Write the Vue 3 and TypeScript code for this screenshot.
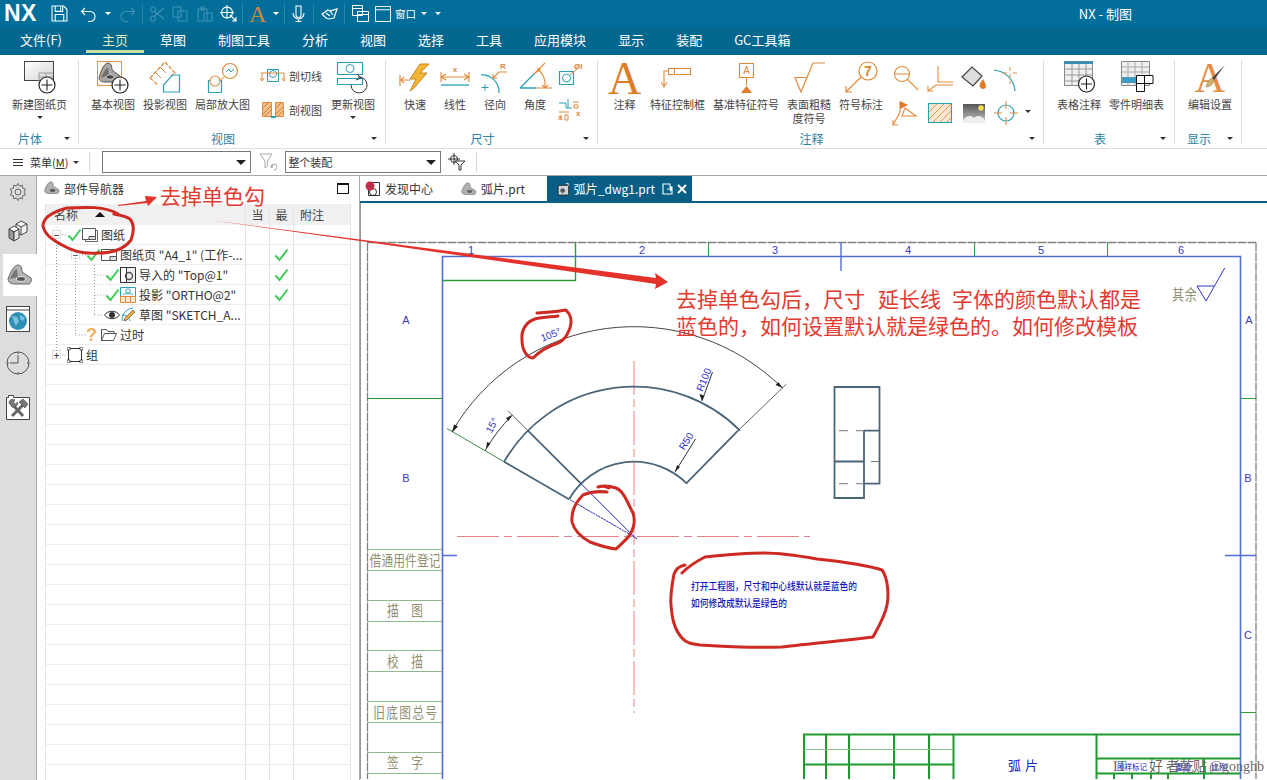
<script setup lang="ts">
interface TreeRow {
  pad: number;
  expander?: '-' | '+';
  status?: 'check' | 'eye' | 'question';
  icon?: string;
  label?: string;
  best?: boolean;
}

const menuTabs = ['主页', '草图', '制图工具', '分析', '视图', '选择', '工具', '应用模块', '显示', '装配', 'GC工具箱'];

const filled: TreeRow[] = [
  { pad: 6, expander: '-', status: 'check', icon: 'sheets', label: '图纸' },
  { pad: 25, expander: '-', status: 'check', icon: 'sheet', label: '图纸页 "A4_1" (工作-...', best: true },
  { pad: 59, status: 'check', icon: 'imported', label: '导入的 "Top@1"', best: true },
  { pad: 59, status: 'check', icon: 'ortho', label: '投影 "ORTHO@2"', best: true },
  { pad: 58, status: 'eye', icon: 'sketch', label: '草图 "SKETCH_A...' },
  { pad: 40, status: 'question', icon: 'folder', label: '过时' },
  { pad: 6, expander: '+', icon: 'group', label: '组' },
];
const rows: TreeRow[] = [...filled, ...Array.from({ length: 21 }, () => ({ pad: 0 }))];

const zoneTicks = [576.5, 709.5, 975.5, 1108.5];
const zoneNumbers = [
  { t: '1', x: 472 }, { t: '2', x: 643 }, { t: '3', x: 776 },
  { t: '4', x: 909 }, { t: '5', x: 1042 }, { t: '6', x: 1182 },
];
const zoneLetters = [
  { t: 'A', x: 407, y: 325 }, { t: 'B', x: 407, y: 483 },
  { t: 'A', x: 1250, y: 325 }, { t: 'B', x: 1249, y: 483 }, { t: 'C', x: 1249, y: 640 },
];
const leftLines = [550.5, 571.5, 601.5, 622.5, 651.5, 672.5, 702.5, 723.5, 753.5, 774.5];
// s = letter-spacing; the trailing gap is compensated in the x of the transform
const leftTexts = [
  { t: '借通用件登记', y: 567, s: 0.2 }, { t: '描图', y: 617, s: 16 }, { t: '校描', y: 668, s: 16 },
  { t: '旧底图总号', y: 719, s: 1.7 }, { t: '签字', y: 769, s: 16 },
];

const cx = 635;
const cy = 537.7;
function polar(r: number, deg: number) {
  const a = (deg * Math.PI) / 180;
  return `${(cx + r * Math.cos(a)).toFixed(1)} ${(cy - r * Math.sin(a)).toFixed(1)}`;
}
function arc(r: number, from: number, to: number) {
  return `M${polar(r, from)} A${r} ${r} 0 0 1 ${polar(r, to)}`;
}
const outerArc = arc(150, 150, 45);
const innerArc = arc(75, 150, 45);
const dimArc = arc(210, 150, 45);
const smallDim = arc(172, 150, 135);
</script>

<template>
  <div class="app">
    <header class="title-bar">
      <span class="logo">NX</span>
      <svg class="qa qa-save" viewBox="0 0 16 16" width="17" height="17"><path d="M1 1h11l3 3v11H1zM4 1v5h7V1M4 15V9h8v6M9 2v3" fill="none" stroke="#fff" stroke-width="1" /></svg>
      <svg class="qa qa-undo" viewBox="0 0 17 16" width="17" height="16"><path d="M5 2 1.500 5.500 5 9M2 5.500h8a5 5 0 0 1 0 10H8" fill="none" stroke="#fff" stroke-width="1.100" /></svg>
      <i class="caret caret-white qa-c1"></i>
      <svg class="qa qa-redo" viewBox="0 0 17 16" width="17" height="16"><path d="M12 2l3.500 3.500L12 9M15 5.500H7a5 5 0 0 0 0 10h2" fill="none" stroke="#3f93b4" stroke-width="1.100" /></svg>
      <i class="qa-sep sep-a"></i>
      <svg class="qa qa-cut" viewBox="0 0 16 16" width="16" height="16"><path d="M15 2 4 11M15 13 5 5M4 1a2.500 2.500 0 1 0 .1 0M4 10a2.500 2.500 0 1 0 .1 0" fill="none" stroke="#3f93b4" stroke-width="1.100" /></svg>
      <svg class="qa qa-copy" viewBox="0 0 16 16" width="16" height="16"><path d="M1 1h8v10H1zM6 5h9v10H6z" fill="none" stroke="#3f93b4" stroke-width="1.100" /></svg>
      <svg class="qa qa-paste" viewBox="0 0 16 16" width="16" height="16"><path d="M1 3h9v12H1zM4 1h3v3H4zM7 7h8v8H7z" fill="none" stroke="#3f93b4" stroke-width="1.100" /></svg>
      <svg class="qa qa-target" viewBox="0 0 17 17" width="17" height="17"><path d="M7 2a5.500 5.500 0 1 0 .1 0M7 0v14M0 7.500h14M10 10l6 6M16 12v4h-4" fill="none" stroke="#fff" stroke-width="1.100" /></svg>
      <i class="qa-sep sep-b"></i>
      <span class="qa qa-font">A</span>
      <i class="caret caret-white qa-c2"></i>
      <i class="qa-sep sep-c"></i>
      <svg class="qa qa-mic" viewBox="0 0 13 17" width="13" height="17"><path d="M4 1h5v9a2.500 2.500 0 0 1-5 0zM1 8a5.500 6 0 0 0 11 0M6.500 14v3M3.500 16.500h6" fill="none" stroke="#fff" stroke-width="1.100" /></svg>
      <i class="qa-sep sep-d"></i>
      <svg class="qa qa-tool" viewBox="0 0 17 12" width="17" height="12"><path d="M1 6l6-4 2 1 7-2-3 9-5 1-3-1zM5 5l4 3M9 3l3 4" fill="none" stroke="#fff" stroke-width="1.200" /></svg>
      <i class="qa-sep sep-e"></i>
      <svg class="qa qa-win1" viewBox="0 0 17 17" width="17" height="17"><path d="M.5.500h10v10H.5zM.5 3.500h10M5.500 6.500h11v10h-11zM5.500 9.500h11" fill="#046d99" stroke="#fff" /></svg>
      <svg class="qa qa-win2" viewBox="0 0 17 17" width="16" height="16"><path d="M.5.500h16v16H.5zM.5 4h16" fill="none" stroke="#fff" /></svg>
      <span class="qa qa-winlabel">窗口</span>
      <i class="caret caret-white qa-c3"></i>
      <i class="caret caret-white qa-c4"></i>
      <span class="app-title">NX - 制图</span>
    </header>

    <nav class="menu-tabs">
      <span class="file-tab">文件(F)</span>
      <span
        v-for="(tab, i) in menuTabs"
        :key="tab"
        class="menu-tab"
        :class="{ active: i === 0 }"
      >{{ tab }}</span>
    </nav>

    <section class="ribbon">
      <div class="group g-sheet">
        <div class="tools">
          <div class="tool">
            <svg class="icon" viewBox="0 0 36 37" width="36" height="37">
              <defs><linearGradient id="sheetFill" x1="0" x2="1" y1="0" y2="1"><stop offset="0" stop-color="#fff" /><stop offset="1" stop-color="#d4d4d4" /></linearGradient></defs>
              <rect x="2.500" y="1.500" width="29" height="19" fill="url(#sheetFill)" stroke="#444" />
              <path d="M17 13h14M17 17h14M17 13v8M24 13v8" stroke="#999" fill="none" />
              <circle cx="25" cy="25" r="8" fill="#fff" stroke="#222" stroke-width="1.200" />
              <path d="M25 19.500v11M19.500 25h11" stroke="#222" stroke-width="1.100" />
            </svg>
            <span class="tool-label">新建图纸页</span>
            <i class="caret"></i>
          </div>
        </div>
        <footer class="group-foot"><span>片体</span><i class="caret"></i></footer>
      </div>

      <div class="group g-view">
        <div class="tools">
          <div class="tool">
            <svg class="icon" viewBox="0 0 36 37" width="36" height="37">
              <rect x="2.500" y="1.500" width="24" height="24" fill="#fff" stroke="#e0924a" />
              <path d="M4 18C6 11 9 3 13 3c3 0 4 3 4 7l8 6c1 2 0 5-2 6H10c-4 0-6-2-6-4z" fill="#a6a6a6" stroke="#555" />
              <path d="M6 18c2-5 5-10 7-10l1 7z" fill="#6f6f6f" />
              <ellipse cx="15" cy="17" rx="4" ry="2.200" fill="#444" stroke="#ddd" stroke-width=".8" />
              <circle cx="25" cy="25" r="8" fill="#fff" stroke="#222" stroke-width="1.200" />
              <path d="M25 19.500v11M19.500 25h11" stroke="#222" stroke-width="1.100" />
            </svg>
            <span class="tool-label">基本视图</span>
          </div>
          <div class="tool">
            <svg class="icon" viewBox="0 0 32 37" width="32" height="37">
              <path d="M1 18 16 2l10 11-4 3M1 18l8 7" fill="none" stroke="#e08a3c" stroke-width="1.300" stroke-dasharray="4 1.500" />
              <path d="M6 12l6 6M11 7l6 6" stroke="#e08a3c" />
              <path d="M14.500 32v-7l9-10h7v17z" fill="none" stroke="#2b9fb6" stroke-width="1.200" />
            </svg>
            <span class="tool-label">投影视图</span>
          </div>
          <div class="tool">
            <svg class="icon" viewBox="0 0 34 37" width="34" height="37">
              <circle cx="24" cy="11" r="7.500" fill="none" stroke="#e08a3c" stroke-width="1.200" />
              <path d="M20 12l3-3 2 3 3-3" fill="none" stroke="#2b9fb6" />
              <path d="M18 17l-5 4" stroke="#e08a3c" />
              <path d="M2.500 20.500h13v12h-13z" fill="none" stroke="#2b9fb6" stroke-width="1.200" />
              <circle cx="9" cy="21" r="5" fill="#fff" stroke="#e08a3c" stroke-width="1.100" />
            </svg>
            <span class="tool-label">局部放大图</span>
          </div>
          <div class="small-col">
            <div class="small-tool">
              <svg viewBox="0 0 25 16" width="25" height="16">
                <path d="M7.500 1.500h11v12h-11z" fill="none" stroke="#2b9fb6" />
                <circle cx="13" cy="6" r="3.500" fill="none" stroke="#2b9fb6" />
                <path d="M1 5h23M2 5v7M24 5v7M0 10l2 3 2-3M22 10l2 3 2-3" fill="none" stroke="#e08a3c" />
              </svg>
              <span class="small-label">剖切线</span>
            </div>
            <div class="small-tool">
              <svg viewBox="0 0 25 16" width="25" height="16">
                <path d="M2.500 .500h9v14h-9zM15.500 .500h8v14h-8z" fill="#f1c08d" stroke="#e08a3c" />
                <path d="M3 6l6-6M3 12 11 4M5 14l6-6M16 6l6-6M16 12l7-7M18 14l5-5" stroke="#d9782a" />
                <path d="M11 15h5" stroke="#2b9fb6" stroke-width="2" />
              </svg>
              <span class="small-label">剖视图</span>
            </div>
          </div>
          <div class="tool">
            <svg class="icon" viewBox="0 0 36 37" width="36" height="37">
              <path d="M2.500 2.500h25v12h-25zM2.500 18.500h25v6h-25z" fill="#fff" stroke="#2b9fb6" stroke-width="1.200" />
              <circle cx="15" cy="8.500" r="4" fill="none" stroke="#2b9fb6" />
              <path d="M23 17a8 8 0 1 1-7 8M22 14l4 4-5 2" fill="none" stroke="#333" />
            </svg>
            <span class="tool-label">更新视图</span>
            <i class="caret"></i>
          </div>
        </div>
        <footer class="group-foot"><span>视图</span><i class="caret"></i></footer>
      </div>

      <div class="group g-dim">
        <div class="tools">
          <div class="tool narrow">
            <svg class="icon" viewBox="0 0 34 37" width="34" height="37">
              <path d="M2 15v11M3 20h9M3 20l3-3M3 20l3 3" fill="none" stroke="#e08a3c" stroke-width="1.200" />
              <path d="M22 4 12 19h6l-6 12 4-3 13-15h-7l9-9z" fill="#f2b632" stroke="#c98422" />
            </svg>
            <span class="tool-label">快速</span>
          </div>
          <div class="tool narrow">
            <svg class="icon" viewBox="0 0 34 37" width="34" height="37">
              <path d="M3 12v10M31 12v10M3 17h28M3 17l5-3M3 17l5 3M31 17l-5-3M31 17l-5 3" fill="none" stroke="#e08a3c" stroke-width="1.100" />
              <path d="M3 25h28" stroke="#2b9fb6" stroke-width="1.300" />
              <text x="17" y="12" class="mini-o" text-anchor="middle">x</text>
            </svg>
            <span class="tool-label">线性</span>
          </div>
          <div class="tool narrow">
            <svg class="icon" viewBox="0 0 34 37" width="34" height="37">
              <path d="M3 15a17 17 0 0 1 18 18" fill="none" stroke="#2b9fb6" stroke-width="1.200" />
              <path d="M7 24v7M3.500 27.500h7" stroke="#2b9fb6" />
              <path d="M29 12h-8L15 18M15 14v4h4" fill="none" stroke="#e08a3c" stroke-width="1.100" />
              <text x="25" y="9" class="mini-o" text-anchor="middle">R</text>
            </svg>
            <span class="tool-label">径向</span>
          </div>
          <div class="tool narrow">
            <svg class="icon" viewBox="0 0 36 37" width="36" height="37">
              <path d="M3 28 17 14M3 28h16" fill="none" stroke="#2b9fb6" stroke-width="1.300" />
              <path d="M17 14 28 3M19 28h16M21 9c5 5 8 11 7 18M18 13l5-3-3-2M25 25l3 3 3-3" fill="none" stroke="#e08a3c" stroke-width="1.100" />
            </svg>
            <span class="tool-label">角度</span>
          </div>
          <div class="small-col dim-col">
            <svg viewBox="0 0 28 26" width="28" height="26">
              <path d="M2.500 11.500h14v13h-14z" fill="none" stroke="#2b9fb6" stroke-width="1.200" />
              <circle cx="9.500" cy="18" r="4" fill="none" stroke="#2b9fb6" />
              <path d="M13 15l7-6" stroke="#e08a3c" />
              <text x="17" y="9" class="mini-o">ØI</text>
            </svg>
            <svg viewBox="0 0 28 26" width="28" height="26">
              <path d="M2 7h7v5M11 3v9M9 12h6" fill="none" stroke="#2b9fb6" />
              <path d="M2 16h10M16 6h6M17 9h4v3h-4zM4 19v5M8 19h3v5H8z" fill="none" stroke="#e08a3c" />
              <text x="19" y="20" class="mini-o">x</text>
              <text x="1" y="24" class="mini-o">x</text>
            </svg>
          </div>
        </div>
        <footer class="group-foot"><span>尺寸</span><i class="caret"></i></footer>
      </div>

      <div class="group g-note">
        <div class="tools">
          <div class="tool note-a">
            <span class="big-a">A</span>
            <span class="tool-label">注释</span>
          </div>
          <div class="tool">
            <svg class="icon" viewBox="0 0 34 37" width="34" height="37">
              <path d="M7.500 8.500h22v6h-22zM13.500 8.500v6M7.500 11H3v15" fill="none" stroke="#e08a3c" stroke-width="1.100" />
              <path d="M0 22l3 5 3-5" fill="none" stroke="#e08a3c" stroke-width="1.100" />
            </svg>
            <span class="tool-label">特征控制框</span>
          </div>
          <div class="tool">
            <svg class="icon" viewBox="0 0 34 37" width="34" height="37">
              <path d="M10.500 3.500h14v14h-14zM17.500 17.500v8" fill="none" stroke="#e08a3c" stroke-width="1.100" />
              <path d="M12 33l5.500-7 5.500 7z" fill="#e07b28" />
              <text x="17.500" y="14" class="mini-a" text-anchor="middle">A</text>
            </svg>
            <span class="tool-label">基准特征符号</span>
          </div>
          <div class="tool">
            <svg class="icon" viewBox="0 0 34 37" width="34" height="37">
              <path d="M3 17.500h12L9 32zM9 32 21 3h12" fill="none" stroke="#e08a3c" stroke-width="1.200" />
            </svg>
            <span class="tool-label wrap">表面粗糙度符号</span>
          </div>
          <div class="tool">
            <svg class="icon" viewBox="0 0 36 37" width="36" height="37">
              <circle cx="25" cy="11" r="9" fill="none" stroke="#e08a3c" stroke-width="1.200" />
              <text x="25" y="16" class="mini-seven" text-anchor="middle">7</text>
              <path d="M18 17 3 32M3 26v6h6" fill="none" stroke="#e08a3c" stroke-width="1.200" />
            </svg>
            <span class="tool-label">符号标注</span>
          </div>
          <div class="symbol-grid">
            <svg viewBox="0 0 28 28" width="28" height="28">
              <circle cx="11" cy="10" r="7.500" fill="none" stroke="#e08a3c" stroke-width="1.100" />
              <path d="M3.500 10h15M16 15l11 11" stroke="#e08a3c" stroke-width="1.100" />
            </svg>
            <svg viewBox="0 0 28 28" width="28" height="28">
              <path d="M12 2v16h15M27 21H10L2 27M2 22v5h5" fill="none" stroke="#e08a3c" stroke-width="1.100" />
            </svg>
            <svg viewBox="0 0 28 28" width="28" height="28">
              <path d="M2 13 12 3l10 9-9 10z" fill="#ddd" stroke="#444" stroke-width="1.200" />
              <path d="M23 15c-3 4-4 6-3 8a3.200 3.200 0 0 0 6 0c0-2-1-5-3-8z" fill="#e07b28" />
            </svg>
            <svg viewBox="0 0 28 28" width="28" height="28">
              <path d="M2 6c11 1 20 9 21 21" fill="none" stroke="#2b9fb6" stroke-width="1.200" />
              <path d="M18 3v4M18 10v4M18 17v3M11 9h4M21 9h4" stroke="#e08a3c" />
            </svg>
            <svg viewBox="0 0 28 28" width="28" height="28">
              <path d="M9 3v10L2 26M2 21v5h5" fill="none" stroke="#e08a3c" stroke-width="1.100" />
              <path d="M9 2l8 4-8 4z" fill="#e07b28" />
              <path d="M14 9l11 8H11z" fill="none" stroke="#e08a3c" stroke-width="1.100" />
            </svg>
            <svg viewBox="0 0 28 28" width="28" height="28">
              <rect x="2.500" y="4.500" width="23" height="19" fill="#fbe6d0" stroke="#2b9fb6" stroke-width="1.100" />
              <path d="M3 13l8-8M3 20 18 5M7 23 25 5M14 23 25 12M21 23l4-4" stroke="#e39a57" />
            </svg>
            <svg viewBox="0 0 28 28" width="28" height="28">
              <defs><linearGradient id="photoFill" x1="0" x2="0" y1="0" y2="1"><stop offset="0" stop-color="#555" /><stop offset="1" stop-color="#c8c8c8" /></linearGradient></defs>
              <rect x="3" y="5" width="22" height="19" fill="url(#photoFill)" />
              <circle cx="21" cy="9" r="2.700" fill="#f3e04a" />
              <path d="M3 21c4-5 8-5 11-2 3-3 7-3 11 2v3H3z" fill="#eee" />
            </svg>
            <svg viewBox="0 0 28 28" width="28" height="28">
              <circle cx="14" cy="14" r="8" fill="none" stroke="#2b9fb6" stroke-width="1.200" />
              <path d="M14 2v8M14 18v8M2 14h8M18 14h8" stroke="#e08a3c" />
            </svg>
          </div>
          <i class="caret grid-caret"></i>
        </div>
        <footer class="group-foot"><span>注释</span><i class="caret"></i></footer>
      </div>

      <div class="group g-table">
        <div class="tools">
          <div class="tool">
            <svg class="icon" viewBox="0 0 36 37" width="36" height="37">
              <path d="M3.500 1.500h28v24h-28z" fill="#efefef" stroke="#888" />
              <path d="M3 1h29v3H3z" fill="#3f8fb0" />
              <path d="M3 9h29M3 15h29M3 21h29M11 4v22M18 4v22M25 4v22" stroke="#999" />
              <circle cx="25.500" cy="24" r="8" fill="#fff" stroke="#222" stroke-width="1.200" />
              <path d="M25.500 18.500v11M20 24h11" stroke="#222" stroke-width="1.100" />
            </svg>
            <span class="tool-label">表格注释</span>
          </div>
          <div class="tool">
            <svg class="icon" viewBox="0 0 36 37" width="36" height="37">
              <path d="M2.500 1.500h28v24h-28z" fill="#efefef" stroke="#888" />
              <path d="M3 7h27M3 12h27M9 2v23M16 2v23M23 2v12" stroke="#aaa" />
              <path d="M3 17h14v6H3z" fill="#3f9cc0" />
              <path d="M17.500 15.500h16.500v8H17.500zM17.500 23.500h8v8h-8zM25.500 15.500v8" fill="#fff" stroke="#111" />
            </svg>
            <span class="tool-label">零件明细表</span>
          </div>
        </div>
        <footer class="group-foot"><span>表</span><i class="caret"></i></footer>
      </div>

      <div class="group g-show">
        <div class="tools">
          <div class="tool brush-tool">
            <span class="big-a small-a">A</span>
            <svg class="brush" viewBox="0 0 24 30" width="24" height="30">
              <path d="M23 2 10 15l2 2z" fill="#444" />
              <path d="M10 15c-3 1-5 4-6 9 4 0 7-2 8-7z" fill="#cdb06e" stroke="#9c7a3c" stroke-width=".5" />
            </svg>
            <span class="tool-label">编辑设置</span>
          </div>
        </div>
        <footer class="group-foot"><span>显示</span><i class="caret"></i></footer>
      </div>
    </section>

    <section class="tool-strip">
      <span class="hamburger"><i></i><i></i><i></i></span>
      <span class="strip-menu">菜单(<u>M</u>)</span>
      <i class="caret"></i>
      <i class="strip-sep"></i>
      <div class="combo combo-a"><i class="caret caret-black"></i></div>
      <svg class="filter-undo" viewBox="0 0 18 18" width="18" height="18">
        <path d="M1 1h12L8.500 8v5L6 15V8z" fill="none" stroke="#aaa" />
        <path d="M11 13l2 2 1-3M12 14a3 3 0 1 1 3 3" fill="none" stroke="#aaa" />
      </svg>
      <div class="combo combo-b"><span>整个装配</span><i class="caret caret-black"></i></div>
      <svg class="filter-cross" viewBox="0 0 18 18" width="18" height="18">
        <circle cx="6" cy="6" r="3.500" fill="none" stroke="#333" />
        <path d="M6 0v12M0 6h12" stroke="#333" />
        <path d="M7 8h10l-4 4v5h-2v-5z" fill="#fff" stroke="#333" />
      </svg>
      <i class="strip-sep sep-last"></i>
    </section>

    <main class="workspace">
      <aside class="rail">
        <div class="rail-item">
          <svg viewBox="0 0 20 20" width="20" height="20"><path d="M10 1.500l1.500 2.600 2.800-.9.400 3 2.900 1-1.500 2.800 1.500 2.800-2.900 1-.4 3-2.800-.9L10 18.500l-1.500-2.600-2.800.9-.4-3-2.900-1 1.500-2.800-1.500-2.800 2.900-1 .4-3 2.800.9z" fill="none" stroke="#666" /><circle cx="10" cy="10" r="3" fill="none" stroke="#666" /></svg>
        </div>
        <div class="rail-item">
          <svg viewBox="0 0 20 22" width="20" height="22">
            <path d="M8 4l5-3 6 3v8l-6 3-5-3z" fill="#f2f2f2" stroke="#444" />
            <path d="M8 4l5 3 6-3M13 7v8" fill="none" stroke="#444" />
            <path d="M1 9l5-3 5 3-5 3z" fill="#fff" stroke="#444" />
            <path d="M1 9l5 3v9l-5-3z" fill="#999" stroke="#444" />
            <path d="M6 12l5-3v9l-5 3z" fill="#e2e2e2" stroke="#444" />
          </svg>
        </div>
        <div class="rail-item active">
          <svg viewBox="0 0 26 22" width="26" height="22">
            <path d="M1 15C3 9 7 1 11 1c3 0 4 3 4 7l9 6c1 2 0 5-2 6H8c-4 0-7-2-7-5z" fill="#b4b4b4" stroke="#666" />
            <path d="M3 15c2-5 5-10 7-10l1 8z" fill="#777" />
            <ellipse cx="14" cy="15" rx="4.500" ry="2.400" fill="#555" stroke="#e8e8e8" />
          </svg>
        </div>
        <div class="rail-item">
          <svg viewBox="0 0 24 26" width="24" height="26">
            <rect x=".5" y=".5" width="23" height="25" fill="#fff" stroke="#444" />
            <path d="M1 4h22" stroke="#444" />
            <circle cx="12" cy="15" r="9" fill="#2f8fb5" />
            <path d="M6 10l5 1 2 4-3 5-2-4zM14 9l5 3-2 3-3-2z" fill="#7cc0dc" />
          </svg>
        </div>
        <div class="rail-item">
          <svg viewBox="0 0 24 24" width="24" height="24">
            <circle cx="12" cy="12" r="11" fill="none" stroke="#555" />
            <path d="M12 4v8H4M12 1v2M12 21v2M1 12h2M21 12h2" fill="none" stroke="#555" />
          </svg>
        </div>
        <div class="rail-item">
          <svg viewBox="0 0 24 26" width="24" height="26">
            <path d="M.5 3.500h2v-2h5v2h16v22H.5z" fill="#fff" stroke="#444" />
            <path d="M7 11l10 11" stroke="#666" stroke-width="3" />
            <path d="M3 9c0-3 3-5 6-3L7.500 8.500 9.500 10 11.500 8c1 3-2 6-5.500 5z" fill="#777" stroke="#333" stroke-width=".5" />
            <path d="M17 11 6 22" stroke="#666" stroke-width="3" />
            <path d="M13 8l4-3 5 5-3 4z" fill="#777" stroke="#333" stroke-width=".5" />
          </svg>
        </div>
      </aside>

      <section class="navigator">
        <div class="nav-head">
          <svg viewBox="0 0 26 22" width="16" height="14">
            <path d="M1 15C3 9 7 1 11 1c3 0 4 3 4 7l9 6c1 2 0 5-2 6H8c-4 0-7-2-7-5z" fill="#b0b0b0" stroke="#666" />
            <ellipse cx="14" cy="15" rx="4.500" ry="2.400" fill="#555" />
          </svg>
          <span>部件导航器</span>
          <i class="maximize"></i>
        </div>
        <div class="tree-table">
          <div class="tree-header">
            <div class="col-name">名称<i class="sort-up"></i></div>
            <div class="col-flag">当</div>
            <div class="col-flag">最</div>
            <div class="col-note">附注</div>
          </div>
          <div
            v-for="(row, i) in rows"
            :key="i"
            class="tree-row"
          >
            <div class="col-name row-name" :style="{ paddingLeft: row.pad + 'px' }">
              <i v-if="row.expander" class="expander">{{ row.expander === '-' ? '−' : '+' }}</i>
              <svg v-if="row.status === 'check'" class="slot" viewBox="0 0 15 14" width="15" height="14"><path d="M1.500 7.500 5.500 12 13.500 1.500" fill="none" stroke="#3ecb58" stroke-width="2" /></svg>
              <svg v-else-if="row.status === 'eye'" class="slot" viewBox="0 0 16 14" width="16" height="14"><path d="M.5 7C4 2 12 2 15.500 7 12 12 4 12 .5 7z" fill="#fff" stroke="#333" /><circle cx="8" cy="7" r="3" fill="#333" /></svg>
              <span v-else-if="row.status === 'question'" class="slot question">?</span>

              <svg v-if="row.icon === 'sheets'" viewBox="0 0 16 14" width="16" height="14"><path d="M3.500 2.500h12v11h-12z" fill="none" stroke="#666" /><path d="M.5 .5h13v11H.5z" fill="#fff" stroke="#555" /><path d="M7 8.500h6.500V11.500H7z" fill="#ddd" stroke="#555" /></svg>
              <svg v-else-if="row.icon === 'sheet'" viewBox="0 0 16 14" width="16" height="14"><path d="M.5 1.500h15v11H.5z" fill="#fff" stroke="#555" /><path d="M9 8.500h6.500v4H9z" fill="#ddd" stroke="#555" /></svg>
              <svg v-else-if="row.icon === 'imported'" viewBox="0 0 16 16" width="16" height="16"><path d="M.5 .5h15v15H.5z" fill="#eee" stroke="#333" /><path d="M.5 .5h6v15h-6z" fill="#fff" stroke="#333" /><circle cx="9" cy="9" r="3.500" fill="none" stroke="#555" stroke-width="1.400" /></svg>
              <svg v-else-if="row.icon === 'ortho'" viewBox="0 0 16 16" width="16" height="16"><path d="M.5 .5h15v9H.5z" fill="#fff" stroke="#2b9fb6" /><circle cx="8" cy="4" r="2.200" fill="none" stroke="#2b9fb6" /><path d="M3 8c2-2 8-2 10 0" fill="none" stroke="#2b9fb6" /><path d="M.5 9.500h15v6H.5zM5.500 9.500v6M10.500 9.500v6" fill="#fbe6d0" stroke="#e08a3c" /></svg>
              <svg v-else-if="row.icon === 'sketch'" viewBox="0 0 16 16" width="16" height="16"><path d="M2 14C2 7 6 2 13 1M2 8c4 0 7 2 8 6" fill="none" stroke="#2b9fb6" /><path d="M5 11l8-8 2 2-8 8-3 1z" fill="#eab03a" stroke="#555" stroke-width=".7" /></svg>
              <svg v-else-if="row.icon === 'folder'" viewBox="0 0 16 14" width="16" height="14"><path d="M.5 12.500V1.500h5l1.500 2h6v2M.5 12.500l3-7h12l-3 7z" fill="#fff" stroke="#555" /></svg>
              <svg v-else-if="row.icon === 'group'" viewBox="0 0 16 16" width="16" height="16"><path d="M1.500 1.500h13v13h-13z" fill="none" stroke="#333" /><path d="M0 0h3v3H0zM13 0h3v3h-3zM0 13h3v3H0zM13 13h3v3h-3z" fill="#fff" stroke="#333" stroke-width=".8" /></svg>

              <span v-if="row.label" class="row-label">{{ row.label }}</span>
            </div>
            <div class="col-flag"></div>
            <div class="col-flag">
              <svg v-if="row.best" viewBox="0 0 15 14" width="15" height="14"><path d="M1.500 7.500 5.500 12 13.500 1.500" fill="none" stroke="#3ecb58" stroke-width="2" /></svg>
            </div>
            <div class="col-note"></div>
          </div>
          <svg class="tree-dots" viewBox="0 0 130 160" width="130" height="160">
            <path d="M10.500 38V151M16 31h4M29.500 48V131M29.500 131h11M36 51h4M48.500 61V111M48.500 71h10M48.500 91h10M48.500 111h9M16 151h5" fill="none" stroke="#999" stroke-dasharray="1 2" />
          </svg>
        </div>
      </section>

      <section class="graphics">
        <div class="doc-tabs">
          <div class="doc-tab tab-home">
            <svg viewBox="0 0 16 16" width="16" height="16"><path d="M3.500 1.500h11v13h-11z" fill="#fff" stroke="#333" /><circle cx="8" cy="11" r="3.500" fill="none" stroke="#333" /><circle cx="5" cy="5" r="4.500" fill="#c0304a" /></svg>
            <span>发现中心</span>
          </div>
          <div class="doc-tab tab-part">
            <svg viewBox="0 0 26 22" width="16" height="14"><path d="M1 15C3 9 7 1 11 1c3 0 4 3 4 7l9 6c1 2 0 5-2 6H8c-4 0-7-2-7-5z" fill="#b0b0b0" stroke="#777" /><ellipse cx="14" cy="15" rx="4.500" ry="2.400" fill="#666" /></svg>
            <span>弧片.prt</span>
          </div>
          <div class="doc-tab tab-active">
            <svg viewBox="0 0 16 16" width="16" height="16"><path d="M1.500 3.500h13v12h-13z" fill="#cfd8dc" stroke="#222" /><circle cx="7" cy="10" r="3.500" fill="#555" stroke="#eee" /><path d="M11 1h3v3" fill="none" stroke="#fff" /></svg>
            <span class="active-name">弧片_dwg1.prt</span>
            <svg class="tab-popout" viewBox="0 0 11 12" width="11" height="12"><path d="M1 1h7v3h2v7H1zM5 6h5M8 4l2 2-2 2" fill="none" stroke="#fff" stroke-width="1.100" /></svg>
            <svg class="tab-close" viewBox="0 0 10 10" width="10" height="10"><path d="M1 1l8 8M9 1 1 9" stroke="#fff" stroke-width="2" /></svg>
          </div>
        </div>
        <svg class="sheet" viewBox="361 204 906 576" width="906" height="576">
          <!-- 图框 -->
          <path d="M368.500 243.500H1257M1257 243.500V780M368.500 243.500V780" fill="none" stroke="#808080" stroke-width="1.300" stroke-dasharray="9 1" />
          <path d="M443.500 780V257.500H1241.500V780" fill="none" stroke="#4f6fd8" stroke-width="1.600" />
          <path d="M443.500 281.500H576.500V243.500" fill="none" stroke="#2f9a3c" stroke-width="1.400" />
          <path v-for="x in zoneTicks" :key="x" :d="`M${x} 243.500V257`" stroke="#2f9a3c" fill="none" />
          <path d="M842 243.500V272" stroke="#4f6fd8" stroke-width="1.400" />
          <path d="M443 556.500H458M1226 556.500H1257" stroke="#4f6fd8" stroke-width="1.400" />
          <path d="M368.500 399.500H443M1241.500 399.500H1257M1241.500 713.500H1257" stroke="#2f9a3c" />
          <text v-for="n in zoneNumbers" :key="n.t" class="zone" :x="n.x" y="255" text-anchor="middle">{{ n.t }}</text>
          <text v-for="(l, i) in zoneLetters" :key="i" class="zone" :x="l.x" :y="l.y" text-anchor="middle">{{ l.t }}</text>

          <!-- 左侧栏 -->
          <path v-for="y in leftLines" :key="y" :d="`M368.500 ${y}H443`" stroke="#8dbb8f" fill="none" />
          <text
            v-for="l in leftTexts"
            :key="l.t"
            class="left-text"
            :transform="`translate(${406 + l.s * 0.39} ${l.y}) scale(.78 1)`"
            :letter-spacing="l.s"
            text-anchor="middle"
          >{{ l.t }}</text>

          <!-- 中心线 -->
          <path d="M635 362V714" stroke="#e8808a" stroke-dasharray="34 4 8 4" fill="none" />
          <path d="M458 537.500H811" stroke="#e8808a" stroke-dasharray="42 5 8 5" fill="none" />

          <!-- 弧片 -->
          <g fill="none" stroke="#4a6478" stroke-width="1.800">
            <path :d="outerArc" />
            <path :d="innerArc" />
            <path d="M505.100 462.700 570 500.200M739 431.700 687 484.700M528.900 431.600 582 484.700" />
          </g>
          <path d="M528.900 431.600 509 411.700M739 431.700 787.500 385" stroke="#666" fill="none" />
          <path d="M505 462.700 448 429.500" stroke="#3f8a4a" fill="none" />
          <path :d="dimArc" fill="none" stroke="#444" />
          <path :d="smallDim" fill="none" stroke="#333" />
          <path d="M582 484.700 635 537.700M570 500.200 635 537.700 638 540" stroke="#2222c0" fill="none" />
          <path d="M570 500.200 635 537.700" stroke="#fff" stroke-dasharray="1 2" fill="none" />
          <path d="M713.500 373 703 402M696.500 440 676 473" stroke="#333" fill="none" />
          <g fill="#222">
            <path d="M453 433.500l2-8 4 2zM783.500 389l-7-3 3-3zM487 450l1-7 3.500 1.500zM513 416l-6 3 2.500 3zM703 402l-2.500-7 4.500 1.500zM676 473l2-7 3 2z" />
          </g>
          <text class="dim" transform="translate(553 339) rotate(-22)" text-anchor="middle">105°</text>
          <text class="dim" transform="translate(496 428) rotate(-62)" text-anchor="middle">15°</text>
          <text class="dim" transform="translate(708 382) rotate(-68)" text-anchor="middle">R100</text>
          <text class="dim" transform="translate(690 444) rotate(-58)" text-anchor="middle">R50</text>

          <!-- 侧视图 -->
          <path d="M835.500 388H880.500V484.700H865V499H835.500ZM865 431.700H880.500M865 431.700V499M835.500 462.500H865" fill="none" stroke="#4a6478" stroke-width="1.800" />
          <path d="M840 431.700H849M857 431.700H865M840 484.700H849M857 484.700H865M872 462.500H880" stroke="#777" fill="none" />

          <!-- 粗糙度 -->
          <text class="left-text" transform="translate(1173 301) scale(.8 1)" letter-spacing="1">其余</text>
          <path d="M1198 287H1215M1198 287 1207 302 1225.700 269" fill="none" stroke="#3333cc" />

          <!-- 注释文字 -->
          <text class="note" x="692" y="591" textLength="166" lengthAdjust="spacingAndGlyphs">打开工程图，尺寸和中心线默认就是蓝色的</text>
          <text class="note" x="692" y="608" textLength="96" lengthAdjust="spacingAndGlyphs">如何修改成默认是绿色的</text>

          <!-- 标题栏 -->
          <g fill="none" stroke="#1f9a2f" stroke-width="2">
            <path d="M805 780V735.500H1241M827 735.500V780M850 735.500V780M895 735.500V780M930 735.500V780M954.500 735.500V780M1097.500 735.500V780M805 765.500H954.500M1097.500 759.500H1241M1097.500 774.500H1241" />
            <path d="M1115 774.500V780M1133 774.500V780M1152 774.500V780M1169 774.500V780M1205 759.500V780" />
          </g>
          <path d="M805 750.500H954" stroke="#8dbb8f" fill="none" />
          <text class="title-name" x="1026" y="771" text-anchor="middle" letter-spacing="4">弧片</text>
          <text class="stamp" x="1118" y="771" textLength="30" lengthAdjust="spacingAndGlyphs">图样标记</text>
          <text class="stamp" x="1176" y="771" textLength="16">重量</text>
          <text class="stamp" x="1212" y="771" textLength="16">比例</text>
          <text class="watermark" y="772"><tspan x="1114">IT</tspan><tspan x="1150">好</tspan><tspan x="1167">者</tspan><tspan x="1181">乾</tspan><tspan x="1194">贴</tspan><tspan x="1210">@gonghb</tspan></text>
        </svg>
      </section>
    </main>

    <!-- 截图上的红色手绘标注 -->
    <svg class="markup" viewBox="0 0 1267 780" width="1267" height="780">
      <text class="red-text" x="160" y="204">去掉单色勾</text>
      <text class="red-text" x="676" y="307">去掉单色勾后，<tspan x="823">尺寸</tspan><tspan x="878">延长线</tspan><tspan x="952">字体的颜色默认都是</tspan></text>
      <text class="red-text" x="676" y="334">蓝色的，如何设置默认就是绿色的。如何修改模板</text>
      <path d="M118 205 146 201 145 196 157 197 148 206 147 203 118 206Z" fill="#e4322a" />
      <path d="M210 220 656 278 655 273 668 282 655 289 656 284 360 241Z" fill="#e4322a" />
      <g fill="none" stroke="#cc2a22" stroke-width="3" stroke-linejoin="round" stroke-linecap="round">
        <path d="M118 214C105 206 85 207 67 208 52 212 43 218 43 226 45 236 55 241 62 245 72 251 85 254 98 253 113 253 125 248 131 240 134 232 134 224 130 219 125 216 120 215 114 214" />
        <path d="M537 313C545 312 556 312 566 310 571 315 572 322 570 328 567 335 565 340 558 343 549 346 541 350 533 358 527 358 522 350 522 340 521 330 526 322 535 319 543 317 551 317 558 316" />
        <path d="M609 488C606 486 601 486 598 487 604 485 610 486 616 488 624 491 628 504 633 513 636 522 633 530 629 536 625 541 620 545 616 549 607 548 598 545 590 542 581 537 574 530 572 522 571 512 576 502 583 495 590 492 598 491 607 492" />
        <path d="M685 565 C679 566 676 569 674 574 C672 585 670 595 671 605 672 618 674 629 682 638 686 643 692 644 700 645 730 647 755 648 782 647 812 643 842 641 873 637 879 626 885 616 887 605 889 595 888 578 882 570 870 566 845 562 817 559 800 556 783 553 764 553 745 553 724 555 705 557 697 561 689 566 682 573" />
      </g>
    </svg>
  </div>
</template>

<style>
html,
body {
  margin: 0;
  overflow: hidden;
  background: #fff;
}
</style>

<style scoped>
.app {
  position: relative;
  display: flex;
  flex-direction: column;
  width: 1267px;
  height: 780px;
  overflow: hidden;
  font-family: "Noto Sans CJK SC", "Noto Sans", sans-serif;
  font-size: 11px;
  color: #444;
  background: #fff;
}

.caret {
  display: inline-block;
  width: 0;
  height: 0;
  border-left: 3px solid transparent;
  border-right: 3px solid transparent;
  border-top: 3px solid #333;
}
.caret-white {
  border-top-color: #fff;
}
.caret-black {
  border-left-width: 5px;
  border-right-width: 5px;
  border-top-width: 5px;
  border-top-color: #222;
}

/* title bar */
.title-bar {
  position: relative;
  flex: none;
  height: 27px;
  background: #046e9a;
  display: flex;
  align-items: center;
}
.logo {
  margin-left: 4px;
  width: 41px;
  font-family: "Liberation Sans", sans-serif;
  font-weight: 700;
  font-size: 23px;
  letter-spacing: 0.5px;
  color: #fff;
}
.qa {
  flex: none;
}
.qa-save { margin-left: 6px; }
.qa-undo { margin-left: 12px; }
.qa-c1 { margin-left: 8px; }
.qa-redo { margin-left: 8px; }
.qa-sep {
  flex: none;
  width: 1px;
  height: 20px;
  background: #2a85aa;
}
.sep-a { margin-left: 6px; }
.qa-cut { margin-left: 6px; }
.qa-copy { margin-left: 7px; }
.qa-paste { margin-left: 9px; }
.qa-target { margin-left: 7px; }
.sep-b { margin-left: 5px; }
.qa-font {
  margin-left: 6px;
  width: 18px;
  font-family: "Liberation Serif", serif;
  font-size: 24px;
  line-height: 24px;
  color: #c98a3c;
}
.qa-c2 { margin-left: 6px; }
.sep-c { margin-left: 5px; }
.qa-mic { margin-left: 7px; }
.sep-d { margin-left: 8px; }
.qa-tool { margin-left: 7px; }
.sep-e { margin-left: 6px; }
.qa-win1 { margin-left: 7px; }
.qa-win2 { margin-left: 6px; }
.qa-winlabel {
  margin-left: 4px;
  font-size: 10.500px;
  color: #fff;
}
.qa-c3 { margin-left: 5px; }
.qa-c4 { margin-left: 8px; }
.app-title {
  margin-left: auto;
  margin-right: 135px;
  font-size: 13px;
  color: #fff;
}

/* menu tabs */
.menu-tabs {
  flex: none;
  display: flex;
  height: 28px;
  background: #04678f;
  font-size: 13px;
  color: #fff;
}
.file-tab {
  width: 86px;
  box-sizing: border-box;
  padding-left: 20px;
  line-height: 26px;
}
.menu-tab {
  padding: 0 16px;
  line-height: 26px;
}
.menu-tab.active {
  height: 23px;
  color: #dfe9b8;
  border-bottom: 3px solid #c9dc9f;
}

/* ribbon */
.ribbon {
  flex: none;
  display: flex;
  height: 93px;
  box-sizing: content-box;
  border-bottom: 1px solid #dedede;
}
.group {
  position: relative;
  display: flex;
  flex-direction: column;
  flex: none;
  box-sizing: border-box;
  margin: 5px 0 4px;
  border-right: 1px solid #dcdcdc;
}
.g-sheet { width: 79px; padding-left: 8px; }
.g-view { width: 307px; padding-left: 8px; }
.g-dim { width: 212px; padding-left: 9px; }
.g-note { width: 446px; padding-left: 5px; }
.g-table { width: 131px; padding-left: 9px; }
.g-show { width: 67px; padding-left: 9px; }
.tools {
  display: flex;
  flex: 1;
  min-height: 0;
}
.tool {
  display: flex;
  flex-direction: column;
  align-items: center;
  padding: 0 4px;
}
.tool .caret {
  margin-top: 5px;
}
.tool.narrow {
  width: 40px;
  box-sizing: border-box;
  padding: 0;
}
.icon {
  flex: none;
}
.tool-label {
  font-size: 11px;
  line-height: 14px;
  white-space: nowrap;
  margin-top: 0;
}
.tool-label.wrap {
  white-space: normal;
  width: 44px;
  text-align: center;
}
.small-col {
  width: 73px;
  display: flex;
  flex-direction: column;
  gap: 18px;
  padding-top: 8px;
}
.small-tool {
  display: flex;
  align-items: center;
  gap: 4px;
  padding-left: 6px;
}
.small-label {
  font-size: 11px;
}
.dim-col {
  width: 36px;
  gap: 10px;
  padding-top: 0;
  margin-left: 2px;
}
.dim-col svg {
  flex: none;
}
.note-a {
  width: 43px;
  box-sizing: border-box;
  padding: 0;
}
.big-a {
  height: 37px;
  font-family: "Liberation Serif", serif;
  font-size: 46px;
  line-height: 37px;
  color: #e07b28;
}
.brush-tool {
  position: relative;
}
.small-a {
  font-size: 42px;
  color: #e58d45;
}
.brush {
  position: absolute;
  top: 3px;
  left: 18px;
}
.symbol-grid {
  display: grid;
  grid-template-columns: 35px 35px 34px 30px;
  grid-auto-rows: 35px;
  justify-items: center;
  align-items: center;
  width: 134px;
  height: 70px;
  margin-top: 0;
}
.grid-caret {
  margin: 50px 0 0 4px;
}
.group-foot {
  flex: none;
  display: flex;
  align-items: center;
  height: 14px;
  margin-bottom: -1px;
  color: #2d84a3;
  font-size: 12px;
}
.group-foot span {
  flex: 1;
  text-align: center;
}
.group-foot .caret {
  margin-right: 8px;
  margin-left: 4px;
}
.g-sheet .group-foot { margin-left: -8px; }
.g-view .group-foot { margin-left: -8px; }
.g-dim .group-foot { margin-left: -9px; }
.g-note .group-foot { margin-left: -5px; }
.g-table .group-foot { margin-left: -9px; }
.g-show .group-foot { margin-left: -9px; }

/* tool strip */
.tool-strip {
  flex: none;
  display: flex;
  align-items: center;
  height: 27px;
  border-bottom: 1px solid #a8a8a8;
  box-sizing: border-box;
}
.hamburger {
  display: flex;
  flex-direction: column;
  gap: 2px;
  width: 10px;
  margin-left: 13px;
}
.hamburger i {
  height: 1px;
  background: #333;
}
.strip-menu {
  margin-left: 7px;
  font-size: 11px;
  color: #333;
}
.tool-strip > .caret {
  margin-left: 5px;
}
.strip-sep {
  width: 1px;
  height: 20px;
  margin-left: 10px;
  background: #d8d8d8;
}
.combo {
  display: flex;
  align-items: center;
  justify-content: space-between;
  box-sizing: border-box;
  height: 22px;
  padding: 0 4px 0 2px;
  border: 1px solid #777;
  font-size: 11px;
  color: #333;
}
.combo-a {
  width: 149px;
  margin-left: 12px;
  justify-content: flex-end;
}
.filter-undo {
  margin-left: 8px;
}
.combo-b {
  width: 156px;
  margin-left: 8px;
}
.filter-cross {
  margin-left: 7px;
}
.sep-last {
  margin-left: 10px;
}

/* workspace */
.workspace {
  flex: 1;
  display: flex;
  min-height: 0;
}
.rail {
  flex: none;
  width: 37px;
  box-sizing: border-box;
  background: #dddddd;
  border-right: 1px solid #a8a8a8;
  padding-top: 0;
  display: flex;
  flex-direction: column;
}
.rail-item {
  display: flex;
  align-items: center;
  justify-content: center;
  height: 39px;
  padding-right: 1px;
}
.rail-item:first-child {
  height: 31px;
}
.rail-item:nth-child(2) {
  height: 47px;
}
.rail-item.active {
  height: 42px;
  width: 34px;
  margin-left: 3px;
  padding-right: 0;
  box-sizing: border-box;
  background: #fff;
  position: relative;
  z-index: 1;
  margin-right: -1px;
}
.rail-item:nth-child(4) {
  height: 46px;
}
.rail-item:nth-child(5) {
  height: 42px;
}
.rail-item:nth-child(6) {
  height: 46px;
}

.navigator {
  flex: none;
  width: 323px;
  box-sizing: border-box;
  padding: 0 9px 0 8px;
  border-right: 1px solid #aaa;
}
.nav-head {
  display: flex;
  align-items: center;
  height: 28px;
  padding-bottom: 4px;
  box-sizing: border-box;
  font-size: 12px;
  color: #333;
}
.nav-head svg {
  margin-left: -1px;
}
.nav-head span {
  margin-left: 4px;
}
.maximize {
  margin-left: auto;
  margin-right: 1px;
  width: 10px;
  height: 8px;
  border: 1px solid #111;
  border-top-width: 2px;
}
.tree-table {
  position: relative;
  width: 304px;
  border-left: 1px solid #e4e4e4;
  border-right: 1px solid #e4e4e4;
  box-sizing: content-box;
}
.tree-header,
.tree-row {
  display: flex;
  align-items: stretch;
}
.tree-header {
  height: 21px;
  background: #f0f0f0;
  font-size: 12px;
  color: #444;
  line-height: 21px;
}
.tree-row {
  height: 20px;
  box-sizing: border-box;
  border-bottom: 1px solid #ececec;
}
.col-name {
  width: 200px;
  flex: none;
  box-sizing: border-box;
  border-right: 1px solid #e4e4e4;
}
.col-flag {
  width: 24px;
  flex: none;
  box-sizing: border-box;
  text-align: center;
  border-right: 1px solid #e4e4e4;
}
.tree-row .col-flag {
  display: flex;
  align-items: center;
  justify-content: center;
}
.col-note {
  flex: 1;
  padding-left: 6px;
}
.tree-header .col-name {
  position: relative;
  padding-left: 8px;
}
.sort-up {
  position: absolute;
  left: 49px;
  top: 8px;
  border-left: 5px solid transparent;
  border-right: 5px solid transparent;
  border-bottom: 5px solid #111;
}
.row-name {
  position: relative;
  display: flex;
  align-items: center;
  white-space: nowrap;
}
.expander {
  flex: none;
  width: 9px;
  height: 9px;
  box-sizing: border-box;
  margin-right: 6px;
  border: 1px solid #ddd;
  background: #fff;
  font-style: normal;
  font-size: 10px;
  line-height: 7px;
  text-align: center;
  color: #111;
}
.slot {
  flex: none;
}
.question {
  display: inline-block;
  width: 15px;
  font-family: "Liberation Sans", sans-serif;
  font-size: 18px;
  line-height: 20px;
  font-weight: 700;
  color: #f0b060;
  text-align: left;
}
.row-label {
  margin-left: 3px;
  font-size: 12px;
  color: #333;
}
.tree-dots {
  position: absolute;
  left: 0;
  top: 0;
  pointer-events: none;
}

/* graphics */
.graphics {
  flex: 1;
  min-width: 0;
  display: flex;
  flex-direction: column;
}
.doc-tabs {
  flex: none;
  display: flex;
  height: 27px;
  box-sizing: border-box;
  border-bottom: 2px solid #0a5f82;
  font-size: 12px;
  color: #333;
}
.doc-tab {
  display: flex;
  align-items: center;
  gap: 4px;
  white-space: nowrap;
}
.tab-home {
  margin-left: 5px;
}
.tab-part {
  margin-left: 28px;
}
.tab-active {
  flex: none;
  margin-left: 22px;
  padding: 0 5px 0 10px;
  width: 145px;
  box-sizing: border-box;
  background: #085e84;
  color: #fff;
}
.active-name {
  flex: none;
}
.tab-popout {
  flex: none;
  margin-left: 3px;
}
.tab-close {
  flex: none;
}
.sheet {
  flex: none;
  display: block;
  background: #fff;
  box-shadow: inset 1px 0 0 #999;
}

.zone {
  font-family: "Liberation Sans", sans-serif;
  font-size: 11px;
  fill: #3a3ac0;
}
.left-text {
  font-family: "Noto Sans CJK SC", sans-serif;
  font-size: 15px;
  fill: #8f9070;
}
.dim {
  font-family: "Liberation Sans", sans-serif;
  font-size: 10px;
  fill: #3030c8;
}
.note {
  font-family: "Noto Sans CJK SC", sans-serif;
  font-size: 10px;
  font-weight: 500;
  fill: #1515c0;
}
.title-name {
  font-family: "Noto Sans CJK SC", sans-serif;
  font-size: 13px;
  fill: #2020c0;
}
.stamp {
  font-family: "Noto Sans CJK SC", sans-serif;
  font-size: 8px;
  fill: #1515c0;
}
.watermark {
  font-family: "Liberation Serif", "Noto Sans CJK SC", serif;
  font-size: 14px;
  fill: #6a6a6a;
}
.mini-o {
  font-family: "Liberation Sans", sans-serif;
  font-size: 8px;
  font-weight: 700;
  fill: #e08a3c;
}
.mini-a {
  font-family: "Liberation Sans", sans-serif;
  font-size: 10px;
  fill: #e08a3c;
}
.mini-seven {
  font-family: "Liberation Sans", sans-serif;
  font-size: 14px;
  font-weight: 700;
  fill: #e08a3c;
}

.markup {
  position: absolute;
  left: 0;
  top: 0;
  pointer-events: none;
}
.red-text {
  font-family: "Noto Sans CJK SC", sans-serif;
  font-size: 21px;
  fill: #e23a30;
}
</style>
